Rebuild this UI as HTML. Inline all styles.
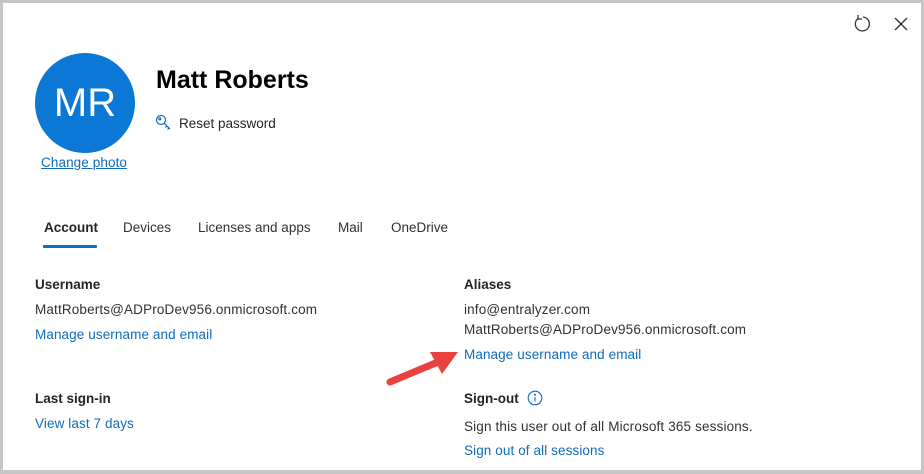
<!DOCTYPE html>
<html><head><style>
*{margin:0;padding:0;box-sizing:border-box}
body{width:924px;height:474px;background:#fff;font-family:"Liberation Sans",sans-serif;position:relative;overflow:hidden;color:#323130}
.frame{position:absolute;left:0;top:0;width:924px;height:474px;border:3px solid #c6c6c6;border-bottom-width:4px;border-right-width:3px}
.a{position:absolute;white-space:nowrap}
.t{font-size:13.5px;color:#323130;letter-spacing:0.15px}
.l{font-size:13.5px;color:#0f6cbd;letter-spacing:0.1px}
.h{font-size:13.5px;font-weight:bold;color:#242424}
.tab{font-size:13.5px;color:#323130;top:220px}
</style></head><body>
<div class="frame"></div>
<div class="a" style="left:35px;top:53px;width:100px;height:100px;border-radius:50%;background:#0a78d4;color:#fff;font-size:40px;text-align:center;line-height:100px">MR</div>
<div class="a l" style="left:41px;top:155px;text-decoration:underline;font-size:13.5px">Change photo</div>
<div class="a" style="left:156px;top:66px;font-size:25px;font-weight:bold;color:#000">Matt Roberts</div>
<svg class="a" style="left:155px;top:114px" width="18" height="18" viewBox="0 0 18 18" fill="none" stroke="#0f6cbd" stroke-width="1.2"><circle cx="6" cy="6" r="4.5"/><circle cx="4.8" cy="4.8" r="1"/><path d="M9 9l6 6M12 12l-1.5 1.5M14 14l-1.5 1.5"/></svg>
<div class="a" style="left:179px;top:116px;font-size:13.5px;color:#242424">Reset password</div>
<svg class="a" style="left:852px;top:14px" width="20" height="20" viewBox="0 0 20 20" fill="none" stroke="#333" stroke-width="1.3"><path d="M6 4.5A7 7 0 1 0 11 3"/><path d="M6 1v4h4"/></svg>
<svg class="a" style="left:894px;top:17px" width="14" height="14" viewBox="0 0 14 14" stroke="#333" stroke-width="1.3"><path d="M1 1l12 12M13 1L1 13"/></svg>
<div class="a tab" style="left:44px;font-weight:bold;color:#242424">Account</div>
<div class="a" style="left:43px;top:245px;width:54px;height:3px;background:#0f6cbd;border-radius:1px"></div>
<div class="a tab" style="left:123px">Devices</div>
<div class="a tab" style="left:198px">Licenses and apps</div>
<div class="a tab" style="left:338px">Mail</div>
<div class="a tab" style="left:391px">OneDrive</div>
<div class="a h" style="left:35px;top:277px">Username</div>
<div class="a t" style="left:35px;top:302px">MattRoberts@ADProDev956.onmicrosoft.com</div>
<div class="a l" style="left:35px;top:327px">Manage username and email</div>
<div class="a h" style="left:35px;top:391px">Last sign-in</div>
<div class="a l" style="left:35px;top:416px">View last 7 days</div>
<div class="a h" style="left:464px;top:277px">Aliases</div>
<div class="a t" style="left:464px;top:302px">info@entralyzer.com</div>
<div class="a t" style="left:464px;top:322px">MattRoberts@ADProDev956.onmicrosoft.com</div>
<div class="a l" style="left:464px;top:347px">Manage username and email</div>
<div class="a h" style="left:464px;top:391px">Sign-out</div>
<svg class="a" style="left:527px;top:390px" width="16" height="16" viewBox="0 0 16 16" fill="none" stroke="#0f6cbd" stroke-width="1.1"><circle cx="8" cy="8" r="6.8"/><path d="M8 7v4.5"/><circle cx="8" cy="4.8" r=".5" fill="#0f6cbd"/></svg>
<div class="a t" style="left:464px;top:419px">Sign this user out of all Microsoft 365 sessions.</div>
<div class="a l" style="left:464px;top:443px">Sign out of all sessions</div>
<svg class="a" style="left:380px;top:340px" width="90" height="60" viewBox="0 0 90 60"><path d="M10 42L58 22" stroke="#e8413e" stroke-width="7" stroke-linecap="round"/><path d="M50 12L78 12L62 34Z" fill="#e8413e"/></svg>
</body></html>
